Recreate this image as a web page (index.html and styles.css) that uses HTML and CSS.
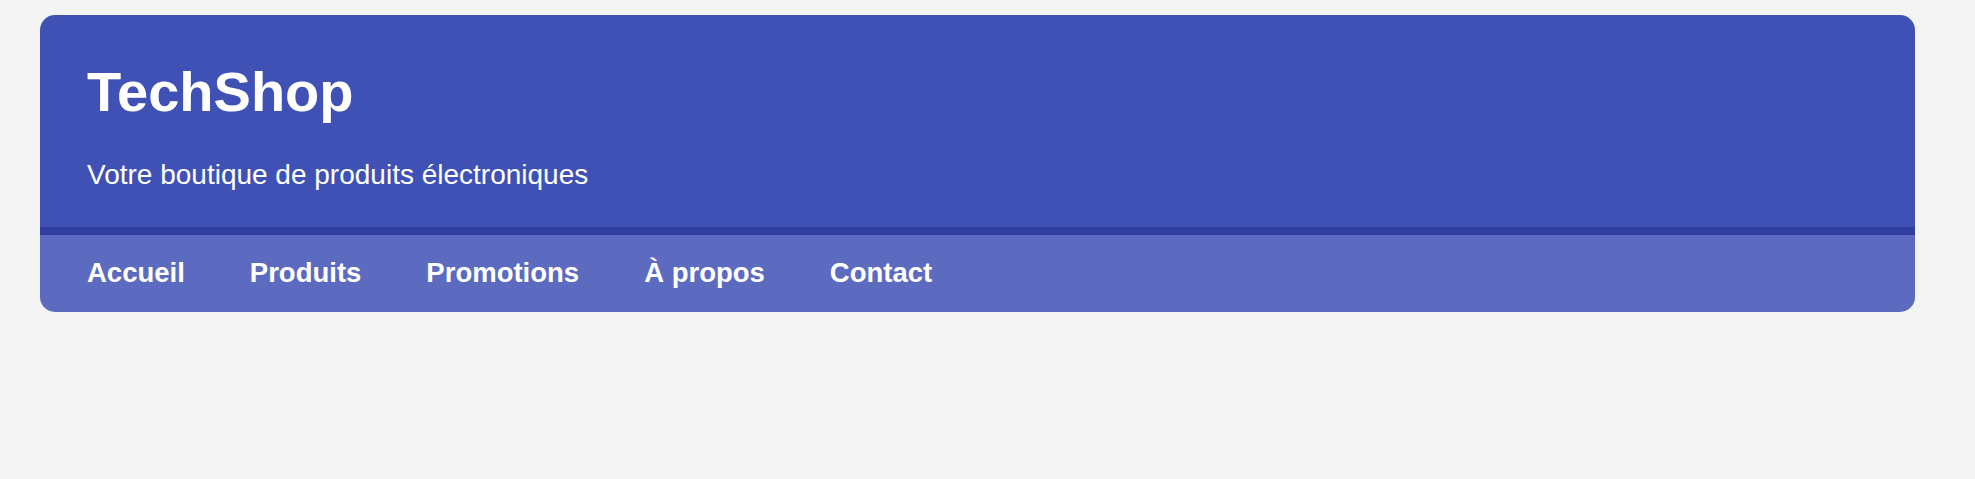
FILE: index.html
```html
<!DOCTYPE html>
<html lang="fr">
<head>
<meta charset="utf-8">
<title>TechShop</title>
<link rel="stylesheet" href="styles.css">
</head>
<body>
<div class="card">
  <header class="hero">
    <h1 class="title">TechShop</h1>
    <p class="subtitle">Votre boutique de produits électroniques</p>
  </header>
  <nav class="nav">
    <a class="nav-link" href="#">Accueil</a>
    <a class="nav-link" href="#">Produits</a>
    <a class="nav-link" href="#">Promotions</a>
    <a class="nav-link" href="#">À propos</a>
    <a class="nav-link" href="#">Contact</a>
  </nav>
</div>
</body>
</html>
```
FILE: styles.css
```css
html, body {
  margin: 0;
  padding: 0;
}
body {
  background: #f4f4f4;
  font-family: "Liberation Sans", Arial, sans-serif;
  color: #ffffff;
}
.card {
  margin: 15px 60px 0 40px;
  border-radius: 15px;
  overflow: hidden;
}
.hero {
  background: #3f51b5;
  padding: 45px 47px 36px;
  border-bottom: 8px solid #303f9f;
}
.title {
  margin: 0;
  font-size: 56px;
  line-height: 64px;
  font-weight: 700;
}
.subtitle {
  margin: 35px 0 0;
  font-size: 28px;
  line-height: 32px;
  font-weight: 400;
}
.nav {
  background: #5c6bc0;
  padding: 22px 47px 23px;
  display: flex;
  gap: 65px;
}
.nav-link {
  color: #ffffff;
  text-decoration: none;
  font-weight: 700;
  font-size: 27.5px;
  line-height: 32px;
}
```
